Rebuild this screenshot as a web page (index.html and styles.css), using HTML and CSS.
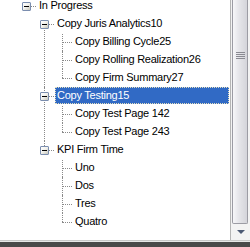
FILE: index.html
```html
<!DOCTYPE html>
<html lang="en">
<head>
    <meta charset="UTF-8">
    <title>Tree</title>
    <link rel="stylesheet" href="styles.css">
</head>
<body>
    <div class="window">
        <div class="pane">
            <div class="tree">
                <ul class="nodes">
                    <li class="node">
                        <div class="row"><span class="toggle"></span><span class="label">In Progress</span></div>
                        <ul class="nodes">
                            <li class="node">
                                <div class="row"><span class="toggle"></span><span class="label">Copy Juris Analytics10</span></div>
                                <ul class="nodes">
                                    <li class="node leaf"><div class="row"><span class="label">Copy Billing Cycle25</span></div></li>
                                    <li class="node leaf"><div class="row"><span class="label">Copy Rolling Realization26</span></div></li>
                                    <li class="node leaf"><div class="row"><span class="label">Copy Firm Summary27</span></div></li>
                                </ul>
                            </li>
                            <li class="node">
                                <div class="row"><span class="toggle"></span><span class="label selected">Copy Testing15</span></div>
                                <ul class="nodes">
                                    <li class="node leaf"><div class="row"><span class="label">Copy Test Page 142</span></div></li>
                                    <li class="node leaf"><div class="row"><span class="label">Copy Test Page 243</span></div></li>
                                </ul>
                            </li>
                            <li class="node">
                                <div class="row"><span class="toggle"></span><span class="label">KPI Firm Time</span></div>
                                <ul class="nodes">
                                    <li class="node leaf"><div class="row"><span class="label">Uno</span></div></li>
                                    <li class="node leaf"><div class="row"><span class="label">Dos</span></div></li>
                                    <li class="node leaf"><div class="row"><span class="label">Tres</span></div></li>
                                    <li class="node leaf"><div class="row"><span class="label">Quatro</span></div></li>
                                </ul>
                            </li>
                        </ul>
                    </li>
                </ul>
            </div>
            <div class="scrollbar">
                <div class="thumb"><span class="grip"></span></div>
                <div class="arrow-down"><span class="tri"></span></div>
            </div>
        </div>
        <div class="frame-bottom"></div>
    </div>
</body>
</html>
```
FILE: styles.css
```css
html, body {
    margin: 0;
    padding: 0;
    background: #fff;
}
body {
    font-family: "Liberation Sans", Arial, sans-serif;
    font-size: 11px;
    letter-spacing: -0.25px;
    color: #000;
    width: 250px;
    height: 247px;
    overflow: hidden;
}
.window {
    display: flex;
    flex-direction: column;
    height: 247px;
}
.pane {
    display: flex;
    height: 241px;
}
.tree {
    flex: 1;
    overflow: hidden;
}
.nodes {
    list-style: none;
    margin: 0;
    padding: 0 0 0 18px;
}
.tree > .nodes {
    padding-left: 22px;
    margin-top: -3px;
}
.node {
    position: relative;
}
.node::before {
    content: "";
    position: absolute;
    left: 4px;
    top: 0;
    bottom: 0;
    border-left: 1px dotted #8a8a8a;
}
.node:first-child::before {
    top: 9px;
}
.leaf:first-child::before {
    top: 1px;
}
.node:last-child::before {
    bottom: auto;
    height: 9px;
}
.leaf:first-child:last-child::before {
    height: 8px;
}
.tree > .nodes > .node::before {
    display: none;
}
.row {
    position: relative;
    display: flex;
    height: 18px;
}
.row::after {
    content: "";
    position: absolute;
    left: 4px;
    top: 9px;
    width: 10px;
    border-top: 1px dotted #8a8a8a;
}
.toggle {
    position: relative;
    z-index: 1;
    width: 9px;
    height: 9px;
    margin-top: 5px;
    box-sizing: border-box;
    border: 1px solid #7b8eaf;
    border-radius: 1px;
    background: linear-gradient(135deg, #fff 0%, #f3f3ef 45%, #c8c7bb 100%);
}
.toggle::after {
    content: "";
    position: absolute;
    left: 1px;
    top: 3px;
    width: 5px;
    height: 1px;
    background: #000;
}
.label {
    position: relative;
    z-index: 1;
    margin-left: 6px;
    padding: 0 2px;
    height: 17px;
    line-height: 17px;
    white-space: nowrap;
}
.leaf .label {
    margin-left: 15px;
}
.label.selected {
    flex: 1;
    box-sizing: border-box;
    margin-right: 1px;
    padding: 0 1px;
    line-height: 15px;
    background: #316ac5;
    color: #fff;
    border: 1px dotted #e4dfbd;
}
.scrollbar {
    width: 19px;
    display: flex;
    flex-direction: column;
    border-left: 1px solid #b5b5b5;
    background: #f3f3f3;
}
.thumb {
    flex: 1;
    margin: 0 2px 0 1px;
    border: 1px solid #9c9ca4;
    border-top: none;
    border-radius: 0 0 2px 2px;
    background: linear-gradient(90deg, #f7f7f9 0%, #e6e6ea 40%, #d4d4da 100%);
    display: flex;
    justify-content: center;
    padding-top: 52px;
}
.grip {
    width: 9px;
    height: 7px;
    background: repeating-linear-gradient(180deg, #8a8a92 0 1px, transparent 1px 2px);
}
.arrow-down {
    height: 16px;
    display: flex;
    justify-content: center;
    align-items: center;
}
.tri {
    width: 0;
    height: 0;
    border-left: 4px solid transparent;
    border-right: 4px solid transparent;
    border-top: 4px solid #4d5a74;
}
.frame-bottom {
    height: 6px;
    border-top: 1px solid #c8c8c8;
    background: linear-gradient(180deg, #e8e8e8 0 1px, #4a4a4a 1px);
}
```
